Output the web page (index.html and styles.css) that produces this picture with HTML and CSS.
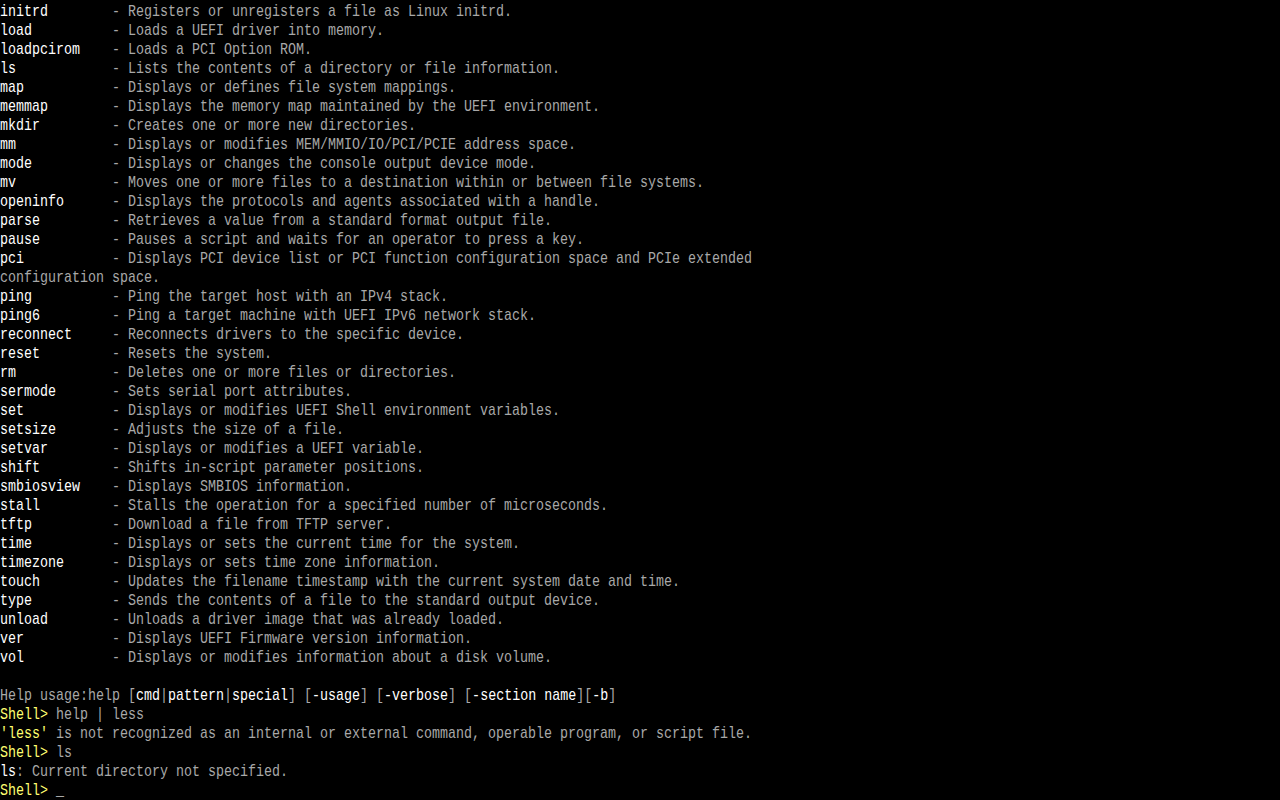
FILE: index.html
```html
<!DOCTYPE html>
<html>
<head>
<meta charset="utf-8">
<link rel="stylesheet" href="styles.css">
<title>UEFI Shell</title>
</head>
<body>
<pre class="screen"><span class="w">initrd</span>        <span class="g">- Registers or unregisters a file as Linux initrd.</span>
<span class="w">load</span>          <span class="g">- Loads a UEFI driver into memory.</span>
<span class="w">loadpcirom</span>    <span class="g">- Loads a PCI Option ROM.</span>
<span class="w">ls</span>            <span class="g">- Lists the contents of a directory or file information.</span>
<span class="w">map</span>           <span class="g">- Displays or defines file system mappings.</span>
<span class="w">memmap</span>        <span class="g">- Displays the memory map maintained by the UEFI environment.</span>
<span class="w">mkdir</span>         <span class="g">- Creates one or more new directories.</span>
<span class="w">mm</span>            <span class="g">- Displays or modifies MEM/MMIO/IO/PCI/PCIE address space.</span>
<span class="w">mode</span>          <span class="g">- Displays or changes the console output device mode.</span>
<span class="w">mv</span>            <span class="g">- Moves one or more files to a destination within or between file systems.</span>
<span class="w">openinfo</span>      <span class="g">- Displays the protocols and agents associated with a handle.</span>
<span class="w">parse</span>         <span class="g">- Retrieves a value from a standard format output file.</span>
<span class="w">pause</span>         <span class="g">- Pauses a script and waits for an operator to press a key.</span>
<span class="w">pci</span>           <span class="g">- Displays PCI device list or PCI function configuration space and PCIe extended</span>
<span class="g">configuration space.</span>
<span class="w">ping</span>          <span class="g">- Ping the target host with an IPv4 stack.</span>
<span class="w">ping6</span>         <span class="g">- Ping a target machine with UEFI IPv6 network stack.</span>
<span class="w">reconnect</span>     <span class="g">- Reconnects drivers to the specific device.</span>
<span class="w">reset</span>         <span class="g">- Resets the system.</span>
<span class="w">rm</span>            <span class="g">- Deletes one or more files or directories.</span>
<span class="w">sermode</span>       <span class="g">- Sets serial port attributes.</span>
<span class="w">set</span>           <span class="g">- Displays or modifies UEFI Shell environment variables.</span>
<span class="w">setsize</span>       <span class="g">- Adjusts the size of a file.</span>
<span class="w">setvar</span>        <span class="g">- Displays or modifies a UEFI variable.</span>
<span class="w">shift</span>         <span class="g">- Shifts in-script parameter positions.</span>
<span class="w">smbiosview</span>    <span class="g">- Displays SMBIOS information.</span>
<span class="w">stall</span>         <span class="g">- Stalls the operation for a specified number of microseconds.</span>
<span class="w">tftp</span>          <span class="g">- Download a file from TFTP server.</span>
<span class="w">time</span>          <span class="g">- Displays or sets the current time for the system.</span>
<span class="w">timezone</span>      <span class="g">- Displays or sets time zone information.</span>
<span class="w">touch</span>         <span class="g">- Updates the filename timestamp with the current system date and time.</span>
<span class="w">type</span>          <span class="g">- Sends the contents of a file to the standard output device.</span>
<span class="w">unload</span>        <span class="g">- Unloads a driver image that was already loaded.</span>
<span class="w">ver</span>           <span class="g">- Displays UEFI Firmware version information.</span>
<span class="w">vol</span>           <span class="g">- Displays or modifies information about a disk volume.</span>

<span class="g">Help usage:help [</span><span class="w">cmd</span><span class="g">|</span><span class="w">pattern</span><span class="g">|</span><span class="w">special</span><span class="g">] [</span><span class="w">-usage</span><span class="g">] [</span><span class="w">-verbose</span><span class="g">] [</span><span class="w">-section name</span><span class="g">][</span><span class="w">-b</span><span class="g">]</span>
<span class="y">Shell&gt;</span> <span class="g">help | less</span>
<span class="y">'less'</span><span class="g"> is not recognized as an internal or external command, operable program, or script file.</span>
<span class="y">Shell&gt;</span> <span class="g">ls</span>
<span class="w">ls</span><span class="g">: Current directory not specified.</span>
<span class="y">Shell&gt;</span> <span class="cursor">_</span></pre>
</body>
</html>
```

FILE: styles.css
```css
html, body {
  margin: 0;
  padding: 0;
  background: #000;
  width: 1280px;
  height: 800px;
  overflow: hidden;
}

.screen {
  margin: 0;
  padding: 2px 0 0 0;
  font-family: "Liberation Mono", "DejaVu Sans Mono", monospace;
  font-size: 17px;
  line-height: 19px;
  color: #a8a8a8;
  white-space: pre;
  transform: scaleX(0.7843);
  transform-origin: 0 0;
}

.w {
  color: #ffffff;
}

.g {
  color: #a8a8a8;
}

.y {
  color: #ffff70;
}

.cursor {
  color: #a8a8a8;
}
```
